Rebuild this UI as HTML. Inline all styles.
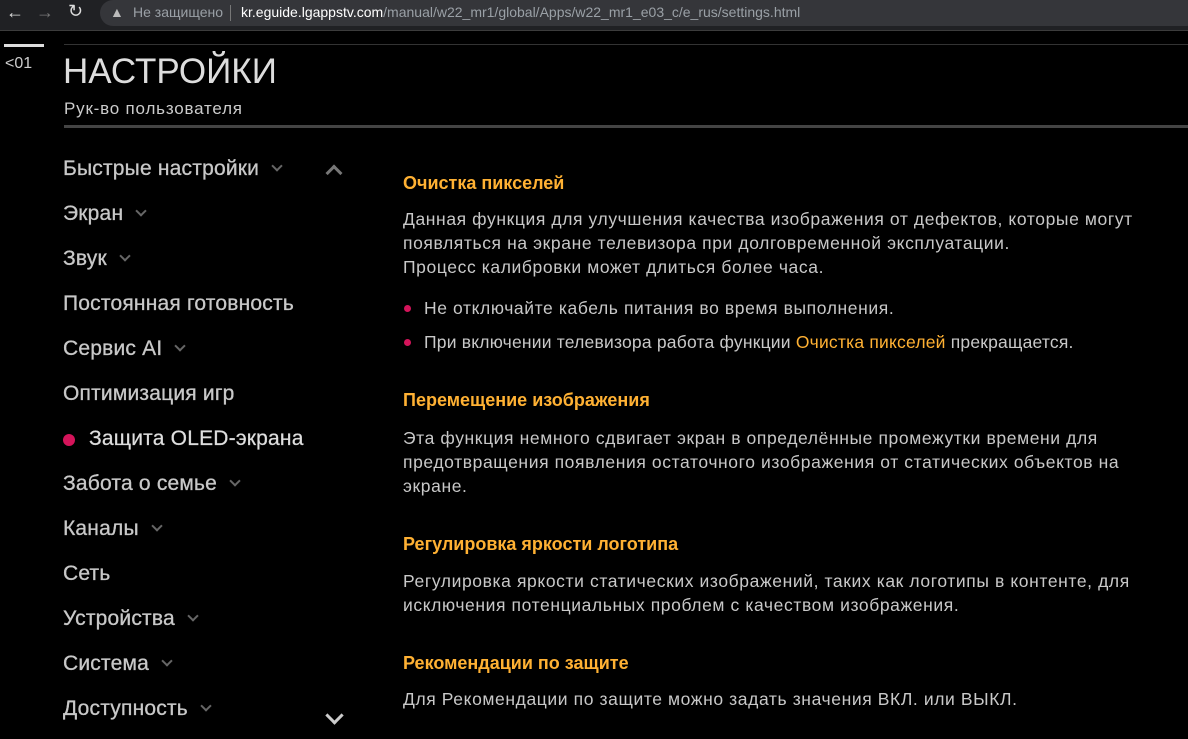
<!DOCTYPE html>
<html><head><meta charset="utf-8"><style>
body{margin:0;width:1188px;height:739px;background:#000;overflow:hidden;font-family:"Liberation Sans",sans-serif;position:relative}
.bar{position:absolute;left:0;top:0;width:1188px;height:30px;background:#202124;border-bottom:1px solid #3c3c3c}
.url{position:absolute;left:100px;top:0;width:1100px;height:26px;background:#35363a;border-radius:13px}
.a{position:absolute;color:#c8c8c8}
.nav{position:absolute;left:63px;font-size:21px;letter-spacing:0.2px;color:#c8c8c8;-webkit-text-stroke:0.3px #c8c8c8}
.chev{display:inline-block;width:6px;height:6px;border-right:2px solid #666;border-bottom:2px solid #666;transform:rotate(45deg);margin-left:14px;position:relative;top:-5px}
.h{position:absolute;left:403px;color:#ffb133;font-size:18px;font-weight:bold}
.p{position:absolute;left:403px;color:#c8c8c8;font-size:17.5px;letter-spacing:0.6px;line-height:24px}
.dot{position:absolute;width:7px;height:7px;border-radius:50%;background:#d4145a}
</style></head><body>
<div class="bar"><div class="url"></div>
<span class="a" style="left:6px;top:2px;font-size:18px;color:#ddd">←</span>
<span class="a" style="left:36px;top:2px;font-size:18px;color:#777">→</span>
<span class="a" style="left:68px;top:1px;font-size:18px;color:#ddd">↻</span>
<span class="a" style="left:110px;top:4px;font-size:14px;color:#bbb">▲</span>
<span class="a" style="left:133px;top:4px;font-size:14px;color:#9aa0a6">Не защищено</span>
<span style="position:absolute;left:230px;top:5px;width:1px;height:16px;background:#777"></span>
<span class="a" style="left:241px;top:4px;font-size:14px;color:#9aa0a6"><span style="color:#fff">kr.eguide.lgappstv.com</span>/manual/w22_mr1/global/Apps/w22_mr1_e03_c/e_rus/settings.html</span>
</div>
<div style="position:absolute;left:4px;top:44px;width:40px;height:3px;background:#ddd"></div>
<div class="a" style="left:5px;top:55px;font-size:16px;color:#ccc">&lt;01</div>
<div style="position:absolute;left:64px;top:44px;width:1124px;height:1px;background:#333"></div>
<div class="a" style="left:63px;top:52px;font-size:35px;color:#ddd">НАСТРОЙКИ</div>
<div class="a" style="left:64px;top:99px;font-size:17px;letter-spacing:0.8px;color:#ccc">Рук-во пользователя</div>
<div style="position:absolute;left:64px;top:125px;width:1124px;height:3px;background:#444"></div>

<div class="nav" style="top:157px">Быстрые настройки<span class="chev"></span></div>
<div style="position:absolute;left:328px;top:167px;width:9px;height:9px;border-left:3px solid #777;border-top:3px solid #777;transform:rotate(45deg)"></div>
<div class="nav" style="top:202px">Экран<span class="chev"></span></div>
<div class="nav" style="top:247px">Звук<span class="chev"></span></div>
<div class="nav" style="top:292px">Постоянная готовность</div>
<div class="nav" style="top:337px">Сервис AI<span class="chev"></span></div>
<div class="nav" style="top:382px">Оптимизация игр</div>
<div class="dot" style="left:63px;top:434px;width:12px;height:12px"></div>
<div class="nav" style="top:427px;left:89px;color:#e0e0e0">Защита OLED-экрана</div>
<div class="nav" style="top:472px">Забота о семье<span class="chev"></span></div>
<div class="nav" style="top:517px">Каналы<span class="chev"></span></div>
<div class="nav" style="top:562px">Сеть</div>
<div class="nav" style="top:607px">Устройства<span class="chev"></span></div>
<div class="nav" style="top:652px">Система<span class="chev"></span></div>
<div class="nav" style="top:697px">Доступность<span class="chev"></span></div>
<div style="position:absolute;left:328px;top:709px;width:10px;height:10px;border-right:3px solid #ccc;border-bottom:3px solid #ccc;transform:rotate(45deg)"></div>

<div class="h" style="top:173px">Очистка пикселей</div>
<div class="p" style="top:207px">Данная функция для улучшения качества изображения от дефектов, которые могут<br>появляться на экране телевизора при долговременной эксплуатации.<br>Процесс калибровки может длиться более часа.</div>
<div class="dot" style="left:404px;top:305px"></div>
<div class="p" style="top:296px;left:424px">Не отключайте кабель питания во время выполнения.</div>
<div class="dot" style="left:404px;top:339px"></div>
<div class="p" style="top:330px;left:424px;letter-spacing:0.2px">При включении телевизора работа функции <span style="color:#ffb133">Очистка пикселей</span> прекращается.</div>
<div class="h" style="top:390px">Перемещение изображения</div>
<div class="p" style="top:426px">Эта функция немного сдвигает экран в определённые промежутки времени для<br>предотвращения появления остаточного изображения от статических объектов на<br>экране.</div>
<div class="h" style="top:534px">Регулировка яркости логотипа</div>
<div class="p" style="top:569px">Регулировка яркости статических изображений, таких как логотипы в контенте, для<br>исключения потенциальных проблем с качеством изображения.</div>
<div class="h" style="top:653px">Рекомендации по защите</div>
<div class="p" style="top:687px">Для Рекомендации по защите можно задать значения ВКЛ. или ВЫКЛ.</div>
</body></html>
